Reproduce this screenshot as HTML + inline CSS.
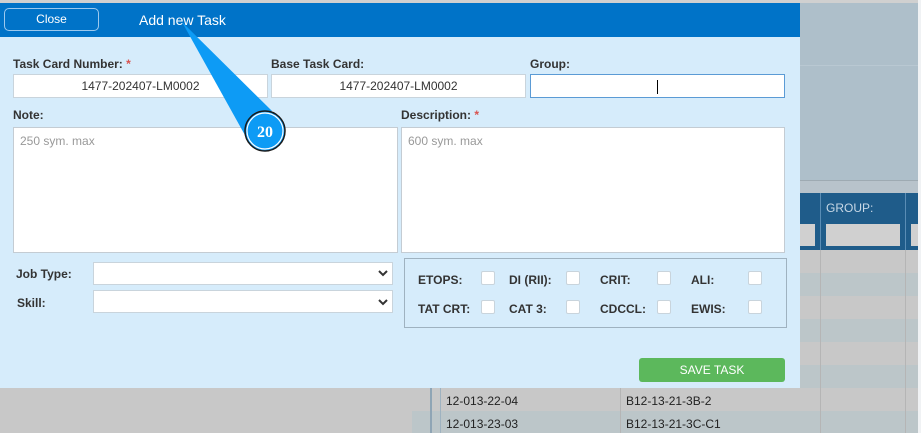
<!DOCTYPE html>
<html><head><style>
*{box-sizing:border-box;margin:0;padding:0}
body{width:921px;height:433px;overflow:hidden;background:#c8c8c8;font-family:"Liberation Sans",sans-serif;position:relative}
.abs{position:absolute}
.lbl{position:absolute;font-size:12px;font-weight:bold;color:#333}
.req{color:#d9534f}
.inp{position:absolute;background:#fff;border:1px solid #c9d4dc;font-size:12px;color:#333;text-align:center;line-height:22px}
.ph{position:absolute;background:#fff;border:1px solid #c4ccd3;font-size:12px;color:#999;padding:6px 6px}
.cb{position:absolute;width:14px;height:14px;background:#fff;border:1px solid #c9d4dc;border-radius:2px}
.cl{position:absolute;font-size:12px;font-weight:bold;color:#333}
</style></head><body>
<!-- background page -->
<div class="abs" style="left:0;top:0;width:921px;height:3px;background:#d0d0d0"></div>
<div class="abs" style="left:800px;top:3px;width:118px;height:177px;background:#aebfca"></div>
<div class="abs" style="left:800px;top:65px;width:118px;height:1px;background:#b9c8d2"></div>
<div class="abs" style="left:800px;top:180px;width:118px;height:13px;background:#b8c3cb;border-top:1px solid #9eaab2"></div>
<div class="abs" style="left:800px;top:193px;width:118px;height:57px;background:#1f5c8a"></div>
<div class="abs" style="left:820px;top:193px;width:1px;height:57px;background:#5a8db5"></div>
<div class="abs" style="left:905px;top:193px;width:1px;height:57px;background:#5a8db5"></div>
<div class="abs" style="left:826px;top:201px;font-size:12px;color:#c8d8e6">GROUP:</div>
<div class="abs" style="left:800px;top:224px;width:15px;height:22px;background:#d0d0d0"></div>
<div class="abs" style="left:826px;top:224px;width:74px;height:22px;background:#d0d0d0"></div>
<div class="abs" style="left:911px;top:224px;width:7px;height:22px;background:#d0d0d0"></div>
<div class="abs" style="left:800px;top:250px;width:118px;height:183px;background:repeating-linear-gradient(#c8c8c8 0 23px,#bcc6c9 23px 46px)"></div>
<div class="abs" style="left:412px;top:388px;width:506px;height:45px;background:linear-gradient(#c8c8c8 0 23px,#bcc6c9 23px)"></div>
<div class="abs" style="left:430px;top:388px;width:2px;height:45px;background:#8fa5b5"></div>
<div class="abs" style="left:440px;top:388px;width:1px;height:45px;background:#9eb2c0"></div>
<div class="abs" style="left:620px;top:388px;width:1px;height:45px;background:#b5b5b5"></div>
<div class="abs" style="left:820px;top:250px;width:1px;height:183px;background:#b5b5b5"></div>
<div class="abs" style="left:905px;top:250px;width:1px;height:183px;background:#b5b5b5"></div>
<div class="abs" style="left:446px;top:394px;font-size:12px;color:#222">12-013-22-04</div>
<div class="abs" style="left:626px;top:394px;font-size:12px;color:#222">B12-13-21-3B-2</div>
<div class="abs" style="left:446px;top:417px;font-size:12px;color:#222">12-013-23-03</div>
<div class="abs" style="left:626px;top:417px;font-size:12px;color:#222">B12-13-21-3C-C1</div>
<div class="abs" style="left:918px;top:0;width:3px;height:433px;background:#f0f2f4"></div>

<!-- modal -->
<div class="abs" style="left:0;top:3px;width:800px;height:385px;background:#d6ecfb"></div>
<div class="abs" style="left:0;top:3px;width:800px;height:34px;background:#0073c8"></div>
<div class="abs" style="left:4px;top:8px;width:95px;height:23px;border:1px solid #9cc9ee;border-radius:5px;color:#fff;font-size:12px;text-align:center;line-height:21px">Close</div>
<div class="abs" style="left:139px;top:12px;font-size:14px;color:#fff">Add new Task</div>

<div class="lbl" style="left:13px;top:57px">Task Card Number: <span class="req">*</span></div>
<div class="lbl" style="left:271px;top:57px">Base Task Card:</div>
<div class="lbl" style="left:530px;top:57px">Group:</div>
<div class="inp" style="left:13px;top:74px;width:255px;height:24px">1477-202407-LM0002</div>
<div class="inp" style="left:271px;top:74px;width:255px;height:24px">1477-202407-LM0002</div>
<div class="inp" style="left:530px;top:74px;width:255px;height:24px;border-color:#5b9bd5"><span style="display:inline-block;width:1px;height:14px;background:#000;vertical-align:middle"></span></div>

<div class="lbl" style="left:13px;top:108px">Note:</div>
<div class="lbl" style="left:401px;top:108px">Description: <span class="req">*</span></div>
<div class="ph" style="left:13px;top:127px;width:385px;height:126px">250 sym. max</div>
<div class="ph" style="left:401px;top:127px;width:384px;height:126px">600 sym. max</div>

<div class="lbl" style="left:16px;top:267px">Job Type:</div>
<div class="lbl" style="left:17px;top:296px">Skill:</div>
<div class="inp" style="left:93px;top:262px;width:300px;height:23px"></div>
<div class="inp" style="left:93px;top:290px;width:300px;height:23px"></div>
<svg class="abs" style="left:378px;top:269px" width="10" height="8"><path d="M1 2l4 4 4-4" stroke="#333" stroke-width="2" fill="none"/></svg>
<svg class="abs" style="left:378px;top:298px" width="10" height="8"><path d="M1 2l4 4 4-4" stroke="#333" stroke-width="2" fill="none"/></svg>

<div class="abs" style="left:404px;top:258px;width:383px;height:70px;border:1px solid #9fb2c0"></div>
<div class="cl" style="left:418px;top:273px">ETOPS:</div><div class="cb" style="left:481px;top:271px"></div>
<div class="cl" style="left:509px;top:273px">DI (RII):</div><div class="cb" style="left:566px;top:271px"></div>
<div class="cl" style="left:600px;top:273px">CRIT:</div><div class="cb" style="left:657px;top:271px"></div>
<div class="cl" style="left:691px;top:273px">ALI:</div><div class="cb" style="left:748px;top:271px"></div>
<div class="cl" style="left:418px;top:302px">TAT CRT:</div><div class="cb" style="left:481px;top:300px"></div>
<div class="cl" style="left:509px;top:302px">CAT 3:</div><div class="cb" style="left:566px;top:300px"></div>
<div class="cl" style="left:600px;top:302px">CDCCL:</div><div class="cb" style="left:657px;top:300px"></div>
<div class="cl" style="left:691px;top:302px">EWIS:</div><div class="cb" style="left:748px;top:300px"></div>

<div class="abs" style="left:639px;top:358px;width:146px;height:24px;background:#5cb85c;border-radius:3px;color:#fff;font-size:12px;text-align:center;line-height:24px">SAVE TASK</div>

<!-- annotation -->
<svg class="abs" style="left:0;top:0" width="921" height="433">
<polygon points="182,22 272,111 246,137" fill="#0d9bf5"/>
<circle cx="265" cy="131" r="20" fill="#0d9bf5" stroke="#1a1a1a" stroke-width="1.5"/>
<circle cx="265" cy="131" r="18" fill="none" stroke="#fff" stroke-width="1.2"/>
<text x="265" y="137" text-anchor="middle" font-family="Liberation Serif" font-weight="bold" font-size="16" fill="#fff">20</text>
</svg>
</body></html>
